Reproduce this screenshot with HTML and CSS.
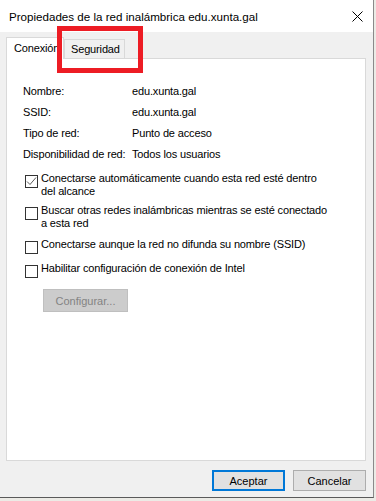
FILE: index.html
```html
<!DOCTYPE html>
<html lang="es">
<head>
<meta charset="utf-8">
<title>Propiedades de la red inalámbrica</title>
<link rel="stylesheet" href="styles.css">
</head>
<body>
<div class="window">
  <div class="titlebar">
    <span class="title">Propiedades de la red inalámbrica edu.xunta.gal</span>
    <svg class="close" width="11" height="11" viewBox="0 0 11 11"><path d="M0.5 0.5 L10.5 10.5 M10.5 0.5 L0.5 10.5" stroke="#000" stroke-width="1" fill="none"/></svg>
  </div>
  <div class="client">
    <div class="tabs">
      <div class="tab tab-active">Conexión</div>
      <div class="tab">Seguridad</div>
    </div>
    <div class="panel">
      <div class="info">
        <span>Nombre:</span><span>edu.xunta.gal</span>
        <span>SSID:</span><span>edu.xunta.gal</span>
        <span>Tipo de red:</span><span>Punto de acceso</span>
        <span>Disponibilidad de red:</span><span>Todos los usuarios</span>
      </div>
      <div class="checks">
        <label class="check row1"><span class="box"><svg width="11" height="11" viewBox="0 0 11 11"><path d="M1 5.5 L4 8.5 L10 1.5" stroke="#5a5a5a" stroke-width="1" fill="none"/></svg></span><span class="ctext">Conectarse automáticamente cuando esta red esté dentro del alcance</span></label>
        <label class="check row2"><span class="box"></span><span class="ctext">Buscar otras redes inalámbricas mientras se esté conectado a esta red</span></label>
        <label class="check row3"><span class="box"></span><span class="ctext">Conectarse aunque la red no difunda su nombre (SSID)</span></label>
        <label class="check row4"><span class="box"></span><span class="ctext">Habilitar configuración de conexión de Intel</span></label>
      </div>
      <button class="btn-config" disabled>Configurar...</button>
    </div>
    <div class="buttons">
      <button class="btn btn-default">Aceptar</button>
      <button class="btn">Cancelar</button>
    </div>
  </div>
  <div class="highlight"></div>
</div>
</body>
</html>
```
FILE: styles.css
```css
* { box-sizing: border-box; }
html, body { margin: 0; padding: 0; }
body {
  width: 376px;
  height: 501px;
  background: #ecebe6;
  font-family: "Liberation Sans", Arial, sans-serif;
  font-size: 11px;
  letter-spacing: -0.15px;
  color: #000;
  overflow: hidden;
}
.window {
  position: relative;
  width: 374px;
  height: 498px;
  background: #f0f0f0;
  border-right: 1px solid #8a8a8a;
  border-bottom: 1px solid #5a5a5a;
  display: flex;
  flex-direction: column;
}
.titlebar {
  height: 32px;
  background: #fff;
  display: flex;
  align-items: center;
  justify-content: space-between;
  padding: 0 10px 0 9px;
  font-size: 11.6px;
  letter-spacing: 0;
}
.close { display: block; margin-top: 1px; }
.client {
  padding: 5px 7px 0 6px;
  display: flex;
  flex-direction: column;
}
.tabs {
  display: flex;
  align-items: flex-end;
  height: 22px;
  margin-bottom: -1px;
  position: relative;
  z-index: 1;
}
.tab {
  height: 19px;
  padding: 3px 4px 0 6px;
  border: 1px solid #d9d9d9;
  border-bottom: none;
  background: #f0f0f0;
  margin-bottom: 1px;
}
.tab-active {
  height: 22px;
  width: 58px;
  padding: 4px 6px 0 7px;
  background: #fff;
  border-color: #d9d9d9;
  margin-bottom: 0;
}
.panel {
  width: 360px;
  height: 403px;
  background: #fff;
  border: 1px solid #d9d9d9;
  padding: 21px 16px 0 16px;
}
.info {
  display: grid;
  grid-template-columns: 109px 1fr;
  grid-auto-rows: 21px;
  align-items: center;
}
.checks {
  margin-top: 8px;
  display: flex;
  flex-direction: column;
}
.check {
  display: flex;
  align-items: flex-start;
  line-height: 13px;
  margin-left: 2px;
}
.box {
  flex: none;
  width: 13px;
  height: 13px;
  border: 1px solid #333;
  background: #fff;
  margin-top: 3px;
  margin-bottom: -3px;
  margin-right: 3px;
  display: flex;
  align-items: center;
  justify-content: center;
}
.box svg { display: block; }
.ctext { width: 292px; }
.row2 { margin-top: 6px; }
.row3 { margin-top: 8px; }
.row4 { margin-top: 11px; }
.btn-config {
  margin: 14px 0 0 20px;
  width: 85px;
  height: 23px;
  background: #cccccc;
  border: 1px solid #bfbfbf;
  color: #838383;
  font: inherit;
  padding: 0;
}
.buttons {
  width: 360px;
  display: flex;
  justify-content: flex-end;
  gap: 8px;
  margin-top: 9px;
}
.btn {
  width: 73px;
  height: 21px;
  background: #e1e1e1;
  border: 1px solid #adadad;
  font: inherit;
  color: #000;
  padding: 0;
}
.btn-default {
  border: 2px solid #0078d7;
}
.highlight {
  position: absolute;
  left: 57px;
  top: 26px;
  width: 86px;
  height: 47px;
  border: 5px solid #ed1c24;
  z-index: 2;
}
```
